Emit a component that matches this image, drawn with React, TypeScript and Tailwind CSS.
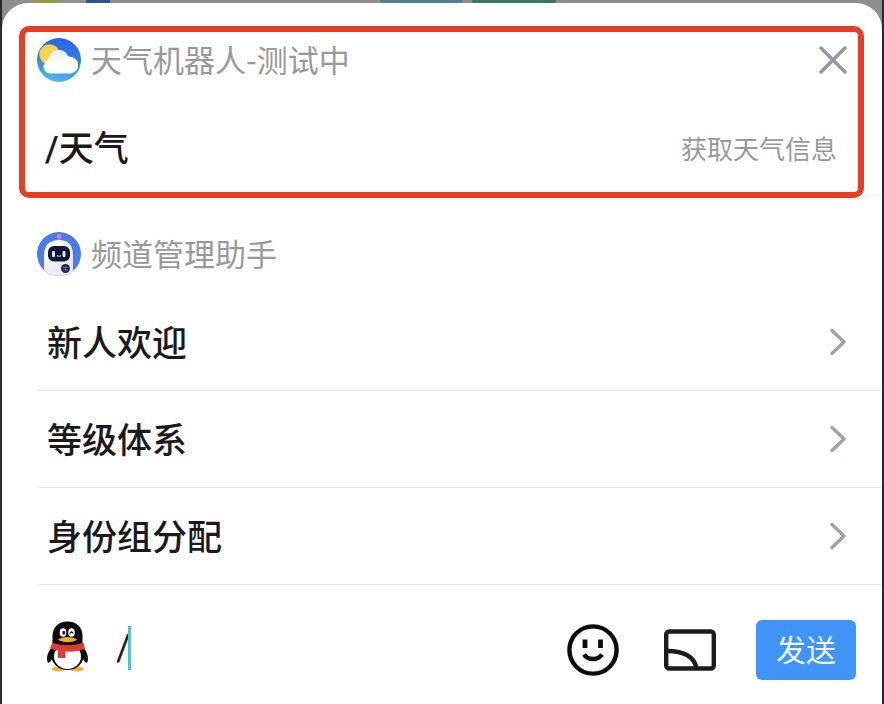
import { useState } from "react";

function WeatherIcon() {
  return (
    <svg viewBox="0 0 44 44" className="size-11 shrink-0" aria-hidden="true">
      <defs>
        <linearGradient id="sky" x1="0.6" y1="0" x2="0.4" y2="1">
          <stop offset="0" stopColor="#2a62e8" />
          <stop offset="0.55" stopColor="#3585e0" />
          <stop offset="1" stopColor="#52bbe9" />
        </linearGradient>
        <linearGradient id="sun" x1="0" y1="0" x2="1" y2="1">
          <stop offset="0" stopColor="#f0cb3c" />
          <stop offset="1" stopColor="#f7e26c" />
        </linearGradient>
        <linearGradient id="cloud" x1="0" y1="0" x2="0" y2="1">
          <stop offset="0" stopColor="#e6edf5" />
          <stop offset="0.6" stopColor="#ffffff" />
        </linearGradient>
      </defs>
      <circle cx="22" cy="22" r="22" fill="url(#sky)" />
      <circle cx="12.5" cy="16.500" r="10.200" fill="url(#sun)" />
      <path
        d="M13.500 35.500a6.800 6.800 0 0 1-4.500-12c1.400-1.200 2.600-1.400 3.100-3.500C13.500 14.500 18 12 22 12c4.300 0 7 2.200 8.500 5.200.6 1.100 1.500 1.300 2.800 1.600A8.400 8.400 0 0 1 34 35.500z"
        fill="url(#cloud)"
      />
    </svg>
  );
}

function RobotIcon() {
  return (
    <svg viewBox="0 0 44 44" className="size-11 shrink-0" aria-hidden="true">
      <defs>
        <clipPath id="robot-clip">
          <circle cx="22" cy="22" r="22" />
        </clipPath>
        <linearGradient id="robot-body" x1="0" y1="0" x2="1" y2="1">
          <stop offset="0" stopColor="#ffffff" />
          <stop offset="1" stopColor="#dfe2f2" />
        </linearGradient>
      </defs>
      <g clipPath="url(#robot-clip)">
        <rect width="44" height="44" fill="#4a7be6" />
        <path d="M22 4v6" stroke="#c86fd6" strokeWidth="2.500" />
        <circle cx="22" cy="4.500" r="2.400" fill="#d873d8" />
        <path d="M7 46V23C7 13 13 8 22 8s14 5 14 15v23z" fill="url(#robot-body)" />
        <rect x="11" y="14" width="22" height="15.500" rx="6" fill="#121833" />
        <rect x="15" y="19" width="3" height="6" rx="1" fill="#dce6fb" />
        <rect x="25.500" y="19" width="3" height="6" rx="1" fill="#dce6fb" />
        <path d="M20 23.500q2 1.500 4 0" stroke="#a9bce8" strokeWidth="1.200" fill="none" />
        <circle cx="28.500" cy="36.500" r="4.500" fill="#2b2146" />
        <path d="M26 35.500h5M26 38h5M28.500 34v5" stroke="#8a6bb0" strokeWidth="0.800" />
      </g>
    </svg>
  );
}

function PenguinIcon() {
  return (
    <svg viewBox="0 0 44 52" className="h-[52px] w-11" aria-hidden="true">
      <ellipse cx="12" cy="48" rx="6.500" ry="2.500" fill="#f0b23a" />
      <ellipse cx="31" cy="48" rx="6.500" ry="2.500" fill="#f0b23a" />
      <path d="M7 25C2 30 0 36 1.500 41c1 2 3 0 5-4zM36 25c5 5 7 11 5.500 16-1 2-3 0-5-4z" fill="#0b0b0d" />
      <ellipse cx="21.500" cy="33.500" rx="16.500" ry="15.500" fill="#0b0b0d" />
      <ellipse cx="21.500" cy="35.500" rx="13.500" ry="12.500" fill="#fff" />
      <path d="M6.500 24V15C6.500 6 12.500 .5 21.500 .5s15 5.500 15 14.500v9c-8 4-22 4-30 0z" fill="#0b0b0d" />
      <ellipse cx="17" cy="11.500" rx="3.300" ry="4.300" fill="#fff" />
      <ellipse cx="25.500" cy="11.500" rx="3.300" ry="4.300" fill="#fff" />
      <ellipse cx="17.800" cy="11.800" rx="1.400" ry="2" fill="#111" />
      <path d="M23.800 12.500q1.700-3 3.400 0" stroke="#111" strokeWidth="1.300" fill="none" />
      <path d="M12 18.500c4-3.400 15-3.400 19 0-4 3.600-15 3.600-19 0z" fill="#f2ae2e" />
      <path d="M6 21.500c9 3.500 22 3.500 31.500 0l1.500 6.500c-6 2-13 3-20 2.500v6H12.500v-7c-3-.5-6-1-8.500-2z" fill="#e03a34" />
      <path d="M12.500 29.500v7H19v-6" fill="none" stroke="#b92824" strokeWidth="0.800" />
    </svg>
  );
}

function CloseIcon() {
  return (
    <svg viewBox="0 0 28 28" className="size-7" fill="none" stroke="#9296a5" strokeWidth="3.400" strokeLinecap="round" aria-hidden="true">
      <path d="M2 2l24 24M26 2L2 26" />
    </svg>
  );
}

function ChevronIcon() {
  return (
    <svg viewBox="0 0 16 28" className="h-7 w-4" fill="none" stroke="#9fa2aa" strokeWidth="3.400" strokeLinecap="round" strokeLinejoin="round" aria-hidden="true">
      <path d="M2 2.500l12 11.500L2 25.500" />
    </svg>
  );
}

function SmileIcon() {
  return (
    <svg viewBox="0 0 52 52" className="size-[52px]" fill="none" stroke="#0c0c0c" strokeWidth="4.400" aria-hidden="true">
      <circle cx="26" cy="26" r="23.600" />
      <path d="M18 15.500v8.500M33.500 15.500v8.500" strokeWidth="4.800" />
      <path d="M17 30.500c4 6 14 6 18 0" />
    </svg>
  );
}

function CastIcon() {
  return (
    <svg viewBox="0 0 52 42" className="h-[42px] w-[52px]" fill="none" stroke="#1c1c1e" strokeWidth="4.400" aria-hidden="true">
      <rect x="2.200" y="2.500" width="47.600" height="37" rx="3" />
      <path d="M3 22c16 0 27 5 29.500 17" />
    </svg>
  );
}

const features = ["新人欢迎", "等级体系", "身份组分配"];

export default function App() {
  const [message, setMessage] = useState("/");

  return (
    <div className="flex min-h-screen flex-col border-x-2 border-[#2b2b2d] bg-[#8e8e8e] font-['Noto_Sans_CJK_SC',sans-serif]">
      <div className="flex h-[3px] shrink-0" aria-hidden="true">
        <div className="ml-8 w-6 bg-[#969a3a]" />
        <div className="w-7 bg-[#8d9196]" />
        <div className="w-6 bg-[#2a5590]" />
        <div className="ml-[270px] w-[82px] rounded-b-xs bg-[#50808f]" />
        <div className="ml-2.5 w-[84px] rounded-b-xs bg-[#39785a]" />
      </div>

      <main className="flex grow flex-col rounded-t-[26px] bg-white">
        <section className="relative flex flex-col pt-6">
          <header className="flex h-[66px] items-center gap-2.5 px-[35px]">
            <WeatherIcon />
            <h2 className="grow pb-0.5 text-[31px] leading-10 text-[#999999]">天气机器人-测试中</h2>
            <button type="button" aria-label="关闭">
              <CloseIcon />
            </button>
          </header>
          <button type="button" className="ml-[35px] flex h-[103px] items-center justify-between border-b border-[#f4f4f4] pt-2 pr-[45px] pl-2">
            <span className="text-[35px] leading-[48px] font-medium text-[#1a1a1a]">
              <span className="font-['Roboto',sans-serif]">/</span>天气
            </span>
            <span className="text-[26px] leading-10 text-[#999999]">获取天气信息</span>
          </button>
          <div className="pointer-events-none absolute top-[23px] right-[18px] -bottom-0.5 left-[17px] rounded-[10px] border-6 border-[#e63e25]" />
        </section>

        <section>
          <header className="flex h-[98px] items-center gap-2.5 px-[35px] pt-[18px]">
            <RobotIcon />
            <h2 className="pb-0.5 text-[31px] leading-10 text-[#999999]">频道管理助手</h2>
          </header>
          <ul className="pl-[35px]">
            {features.map((name) => (
              <li key={name} className="border-b border-[#ebebeb]">
                <button type="button" className="flex h-24 w-full items-center justify-between pr-9 pl-2.5">
                  <span className="pb-0.5 text-[35px] leading-[48px] font-medium text-[#1a1a1a]">{name}</span>
                  <ChevronIcon />
                </button>
              </li>
            ))}
          </ul>
        </section>

        <form className="flex h-[120px] items-center pt-2.5 pr-[26px] pl-11" onSubmit={(e) => e.preventDefault()}>
          <div className="shrink-0 pb-1.5">
            <PenguinIcon />
          </div>
          <div className="relative ml-[26px] flex min-w-0 flex-1 items-center pb-1">
            <input
              aria-label="消息"
              value={message}
              onChange={(e) => setMessage(e.target.value)}
              className="h-12 w-full min-w-0 bg-transparent font-['Roboto','Noto_Sans_CJK_SC',sans-serif] text-[36px] text-[#1f1f1f] caret-[#38c0d8] outline-none"
            />
            <span className="pointer-events-none absolute left-3 h-11 w-[3px] bg-[#4fc3d8]" />
          </div>
          <div className="flex shrink-0 items-center gap-[45px]">
            <button type="button" aria-label="表情">
              <SmileIcon />
            </button>
            <button type="button" aria-label="投屏">
              <CastIcon />
            </button>
          </div>
          <button type="submit" className="ml-10 h-[60px] w-[100px] shrink-0 rounded-md bg-[#4094f7] pb-1 text-[30px] leading-10 text-[#f2f8ff]">
            发送
          </button>
        </form>
      </main>
    </div>
  );
}
